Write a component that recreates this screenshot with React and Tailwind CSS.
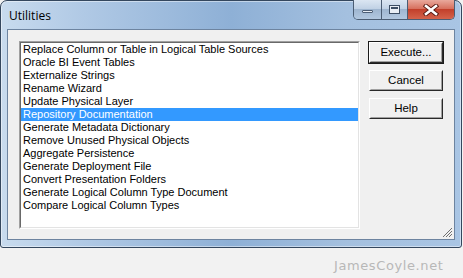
import React from "react";

const items = [
  "Replace Column or Table in Logical Table Sources",
  "Oracle BI Event Tables",
  "Externalize Strings",
  "Rename Wizard",
  "Update Physical Layer",
  "Repository Documentation",
  "Generate Metadata Dictionary",
  "Remove Unused Physical Objects",
  "Aggregate Persistence",
  "Generate Deployment File",
  "Convert Presentation Folders",
  "Generate Logical Column Type Document",
  "Compare Logical Column Types",
];

function Btn({ label, def }) {
  return (
    <div
      className={
        "h-[23px] w-[76px] " +
        (def ? "border border-[#1a1a1a]" : "border border-transparent")
      }
    >
      <div className="h-full w-full border border-t-white border-l-white border-b-[#2a2a2a] border-r-[#2a2a2a]">
        <div className="flex h-full w-full items-center justify-center border border-t-[#f0f0f0] border-l-[#f0f0f0] border-b-[#a0a0a0] border-r-[#a0a0a0] bg-[#f0f0f0] text-[11.5px] text-black">
          {label}
        </div>
      </div>
    </div>
  );
}

export default function App() {
  return (
    <div
      className="relative h-[278px] w-[463px] overflow-hidden bg-[#f2f2f2]"
      style={{ fontFamily: '"Liberation Sans", Arial, sans-serif' }}
    >
      <div className="flex h-[248px] w-[462px] flex-col rounded-t-[7px] rounded-b-[3px] border border-[#34475e] bg-[linear-gradient(90deg,#c8dbee_0%,#b0c9e5_18%,#8eb0d6_50%,#a4c0df_75%,#a9c5e4_100%)] shadow-[inset_0_0_0_1px_rgba(255,255,255,0.45)]">
        <div className="relative flex h-[28px] shrink-0 items-start">
          <div
            className="ml-[8px] mt-[6px] text-[12px] text-black"
            style={{ fontFamily: '"Open Sans", "Noto Sans", sans-serif' }}
          >
            Utilities
          </div>
          <div className="absolute right-[6px] top-[-1px] flex h-[20px] overflow-hidden rounded-b-[5px] border border-t-0 border-[#4b5d73]">
            <div className="flex w-[28px] items-center justify-center border-r border-[#4b5d73] bg-[linear-gradient(180deg,#dbe6f2_0%,#c1d2e5_45%,#9fb6d0_50%,#b2c8e0_100%)]">
              <div className="mt-[4px] h-[3px] w-[11px] rounded-[1px] border border-[#4c5e75] bg-[#e8eef5]" />
            </div>
            <div className="flex w-[26px] items-center justify-center border-r border-[#4b5d73] bg-[linear-gradient(180deg,#dbe6f2_0%,#c1d2e5_45%,#9fb6d0_50%,#b2c8e0_100%)]">
              <div className="h-[9px] w-[11px] border border-[#3c4e64] bg-[#e8eef5] p-[1px]">
                <div className="h-full w-full border-t-2 border-[#3c4e64]" />
              </div>
            </div>
            <div className="flex w-[46px] items-center justify-center bg-[linear-gradient(180deg,#e9a99c_0%,#d7715f_45%,#c2402b_50%,#d4634b_100%)]">
              <svg width="16" height="12" viewBox="0 0 16 12">
                <path
                  d="M3 2 L13 10 M13 2 L3 10"
                  stroke="#5a1a12"
                  strokeWidth="4.4"
                  strokeLinecap="square"
                />
                <path
                  d="M3 2 L13 10 M13 2 L3 10"
                  stroke="#ffffff"
                  strokeWidth="2.6"
                  strokeLinecap="square"
                />
              </svg>
            </div>
          </div>
        </div>
        <div className="relative mx-[6px] flex h-[211px] shrink-0 border border-[#6d84a0] bg-[#f0f0f0] pl-[11px] pt-[11px]">
          <div className="h-[188px] w-[341px] border border-t-[#a0a0a0] border-l-[#a0a0a0] border-b-white border-r-white">
            <div className="h-full w-full border border-t-[#696969] border-l-[#696969] border-b-[#e3e3e3] border-r-[#e3e3e3] bg-white">
              {items.map((t, i) => (
                <div
                  key={t}
                  className={
                    "h-[13px] whitespace-nowrap pl-[2px] text-[11px] leading-[13px] " +
                    (i === 5 ? "bg-[#3399ff] text-white" : "text-black")
                  }
                >
                  {t}
                </div>
              ))}
            </div>
          </div>
          <div className="ml-[8px] flex flex-col gap-[5px]">
            <Btn label="Execute..." def />
            <Btn label="Cancel" />
            <Btn label="Help" />
          </div>
          <svg
            className="absolute bottom-[1px] right-[1px]"
            width="11"
            height="11"
            viewBox="0 0 11 11"
          >
            <path
              d="M10 1 L1 10 M10 4 L4 10 M10 7 L7 10"
              stroke="#6f6f6f"
              strokeWidth="1"
            />
          </svg>
        </div>
      </div>
      <div
        className="absolute left-[334px] top-[256px] text-[13px] tracking-[0.6px] text-[#b8b8b8]"
        style={{ fontFamily: '"DejaVu Sans", sans-serif' }}
      >
        JamesCoyle.net
      </div>
    </div>
  );
}
